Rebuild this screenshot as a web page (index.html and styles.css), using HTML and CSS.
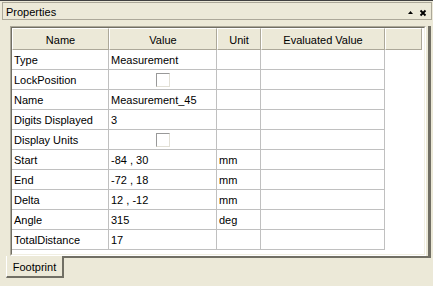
FILE: index.html
```html
<!DOCTYPE html>
<html>
	<head>
		<meta charset="UTF-8">
		<title>Properties</title>
		<link rel="stylesheet" href="styles.css">
	</head>
	<body>
		<div class="caption">
			<span class="caption-title">Properties</span>
			<span class="caption-buttons">
				<svg width="7" height="7" viewBox="0 0 7 7"><path d="M1 5 L6 5 L3.5 2 Z" fill="#000"/></svg>
				<svg width="8" height="8" viewBox="0 0 8 8"><path d="M1.5 1.5 L6.5 6.5 M6.5 1.5 L1.5 6.5" stroke="#000" stroke-width="1.8"/></svg>
			</span>
		</div>

		<div class="page">
			<div class="grid-box">
				<div class="grid-inner">
					<table class="grid">
						<colgroup>
							<col class="col-name">
							<col class="col-value">
							<col class="col-unit">
							<col class="col-eval">
							<col class="col-filler">
						</colgroup>
						<thead>
							<tr>
								<th>Name</th>
								<th>Value</th>
								<th>Unit</th>
								<th>Evaluated Value</th>
								<th></th>
							</tr>
						</thead>
						<tbody>
							<tr><td>Type</td><td>Measurement</td><td></td><td></td><td class="filler"></td></tr>
							<tr><td>LockPosition</td><td class="check-cell"><span class="checkbox"></span></td><td></td><td></td><td class="filler"></td></tr>
							<tr><td>Name</td><td>Measurement_45</td><td></td><td></td><td class="filler"></td></tr>
							<tr><td>Digits Displayed</td><td>3</td><td></td><td></td><td class="filler"></td></tr>
							<tr><td>Display Units</td><td class="check-cell"><span class="checkbox"></span></td><td></td><td></td><td class="filler"></td></tr>
							<tr><td>Start</td><td>-84 , 30</td><td>mm</td><td></td><td class="filler"></td></tr>
							<tr><td>End</td><td>-72 , 18</td><td>mm</td><td></td><td class="filler"></td></tr>
							<tr><td>Delta</td><td>12 , -12</td><td>mm</td><td></td><td class="filler"></td></tr>
							<tr><td>Angle</td><td>315</td><td>deg</td><td></td><td class="filler"></td></tr>
							<tr><td>TotalDistance</td><td>17</td><td></td><td></td><td class="filler"></td></tr>
						</tbody>
					</table>
				</div>
			</div>
		</div>

		<div class="tabs">
			<div class="tab">Footprint</div>
		</div>
	</body>
</html>
```

FILE: styles.css
```css
* {
	box-sizing: border-box;
	font-family: "Liberation Sans", Arial, sans-serif;
	font-size: 11px;
}
html, body {
	margin: 0;
	padding: 0;
	height: 100%;
	background: #ece9d8;
	color: #000;
}
body {
	border-top: 1px solid #404040;
	overflow: hidden;
}

/* caption bar */
.caption {
	margin: 1px 1px 0 2px;
	height: 18px;
	border: 1px solid #aca899;
	display: flex;
	align-items: center;
	justify-content: space-between;
	padding: 1px 4px 0 3px;
}
.caption-buttons {
	display: flex;
	align-items: center;
	gap: 5px;
	padding-top: 2px;
}
.caption-buttons svg {
	display: block;
}

/* property page */
.page {
	margin: 6px 2px 0 10px;
	padding-right: 2px;
	border-right: 3px solid #716f64;
	border-bottom: 2px solid #716f64;
	display: flex;
}
.grid-box {
	flex: 1;
	border: 1px solid;
	border-color: #aca899 #fff #fff #aca899;
}
.grid-inner {
	border: 1px solid;
	border-color: #716f64 #f1efe2 #f1efe2 #716f64;
	background: #fff;
	height: 228px;
}
.grid {
	table-layout: fixed;
	border-collapse: separate;
	border-spacing: 0;
	width: 410px;
}
.col-name { width: 97px; }
.col-value { width: 108px; }
.col-unit { width: 44px; }
.col-eval { width: 124px; }
.col-filler { width: 37px; }

.grid th {
	height: 22px;
	padding: 1px 0 0 0;
	font-weight: normal;
	text-align: center;
	background: #ece9d8;
	border-top: 1px solid #fff;
	border-left: 1px solid #fff;
	border-right: 1px solid #aca899;
	border-bottom: 1px solid #aca899;
}
.grid td {
	height: 20px;
	padding: 1px 2px 0 2px;
	white-space: nowrap;
	overflow: hidden;
	border-right: 1px solid #c0c0c0;
	border-bottom: 1px solid #c0c0c0;
}
.grid td.filler {
	border: none;
}
.check-cell {
	text-align: center;
}
.checkbox {
	display: inline-block;
	vertical-align: middle;
	width: 14px;
	height: 14px;
	background: #fff;
	border: 1px solid;
	border-color: #999 #e2e0d6 #e2e0d6 #999;
	margin-top: -1px;
}

/* bottom tabs */
.tabs {
	display: flex;
	padding-left: 6px;
	margin-top: -2px;
}
.tab {
	width: 58px;
	height: 22px;
	background: #ece9d8;
	border-left: 1px solid #fff;
	border-right: 2px solid #716f64;
	border-bottom: 2px solid #716f64;
	text-align: center;
	padding-top: 5px;
}
```
